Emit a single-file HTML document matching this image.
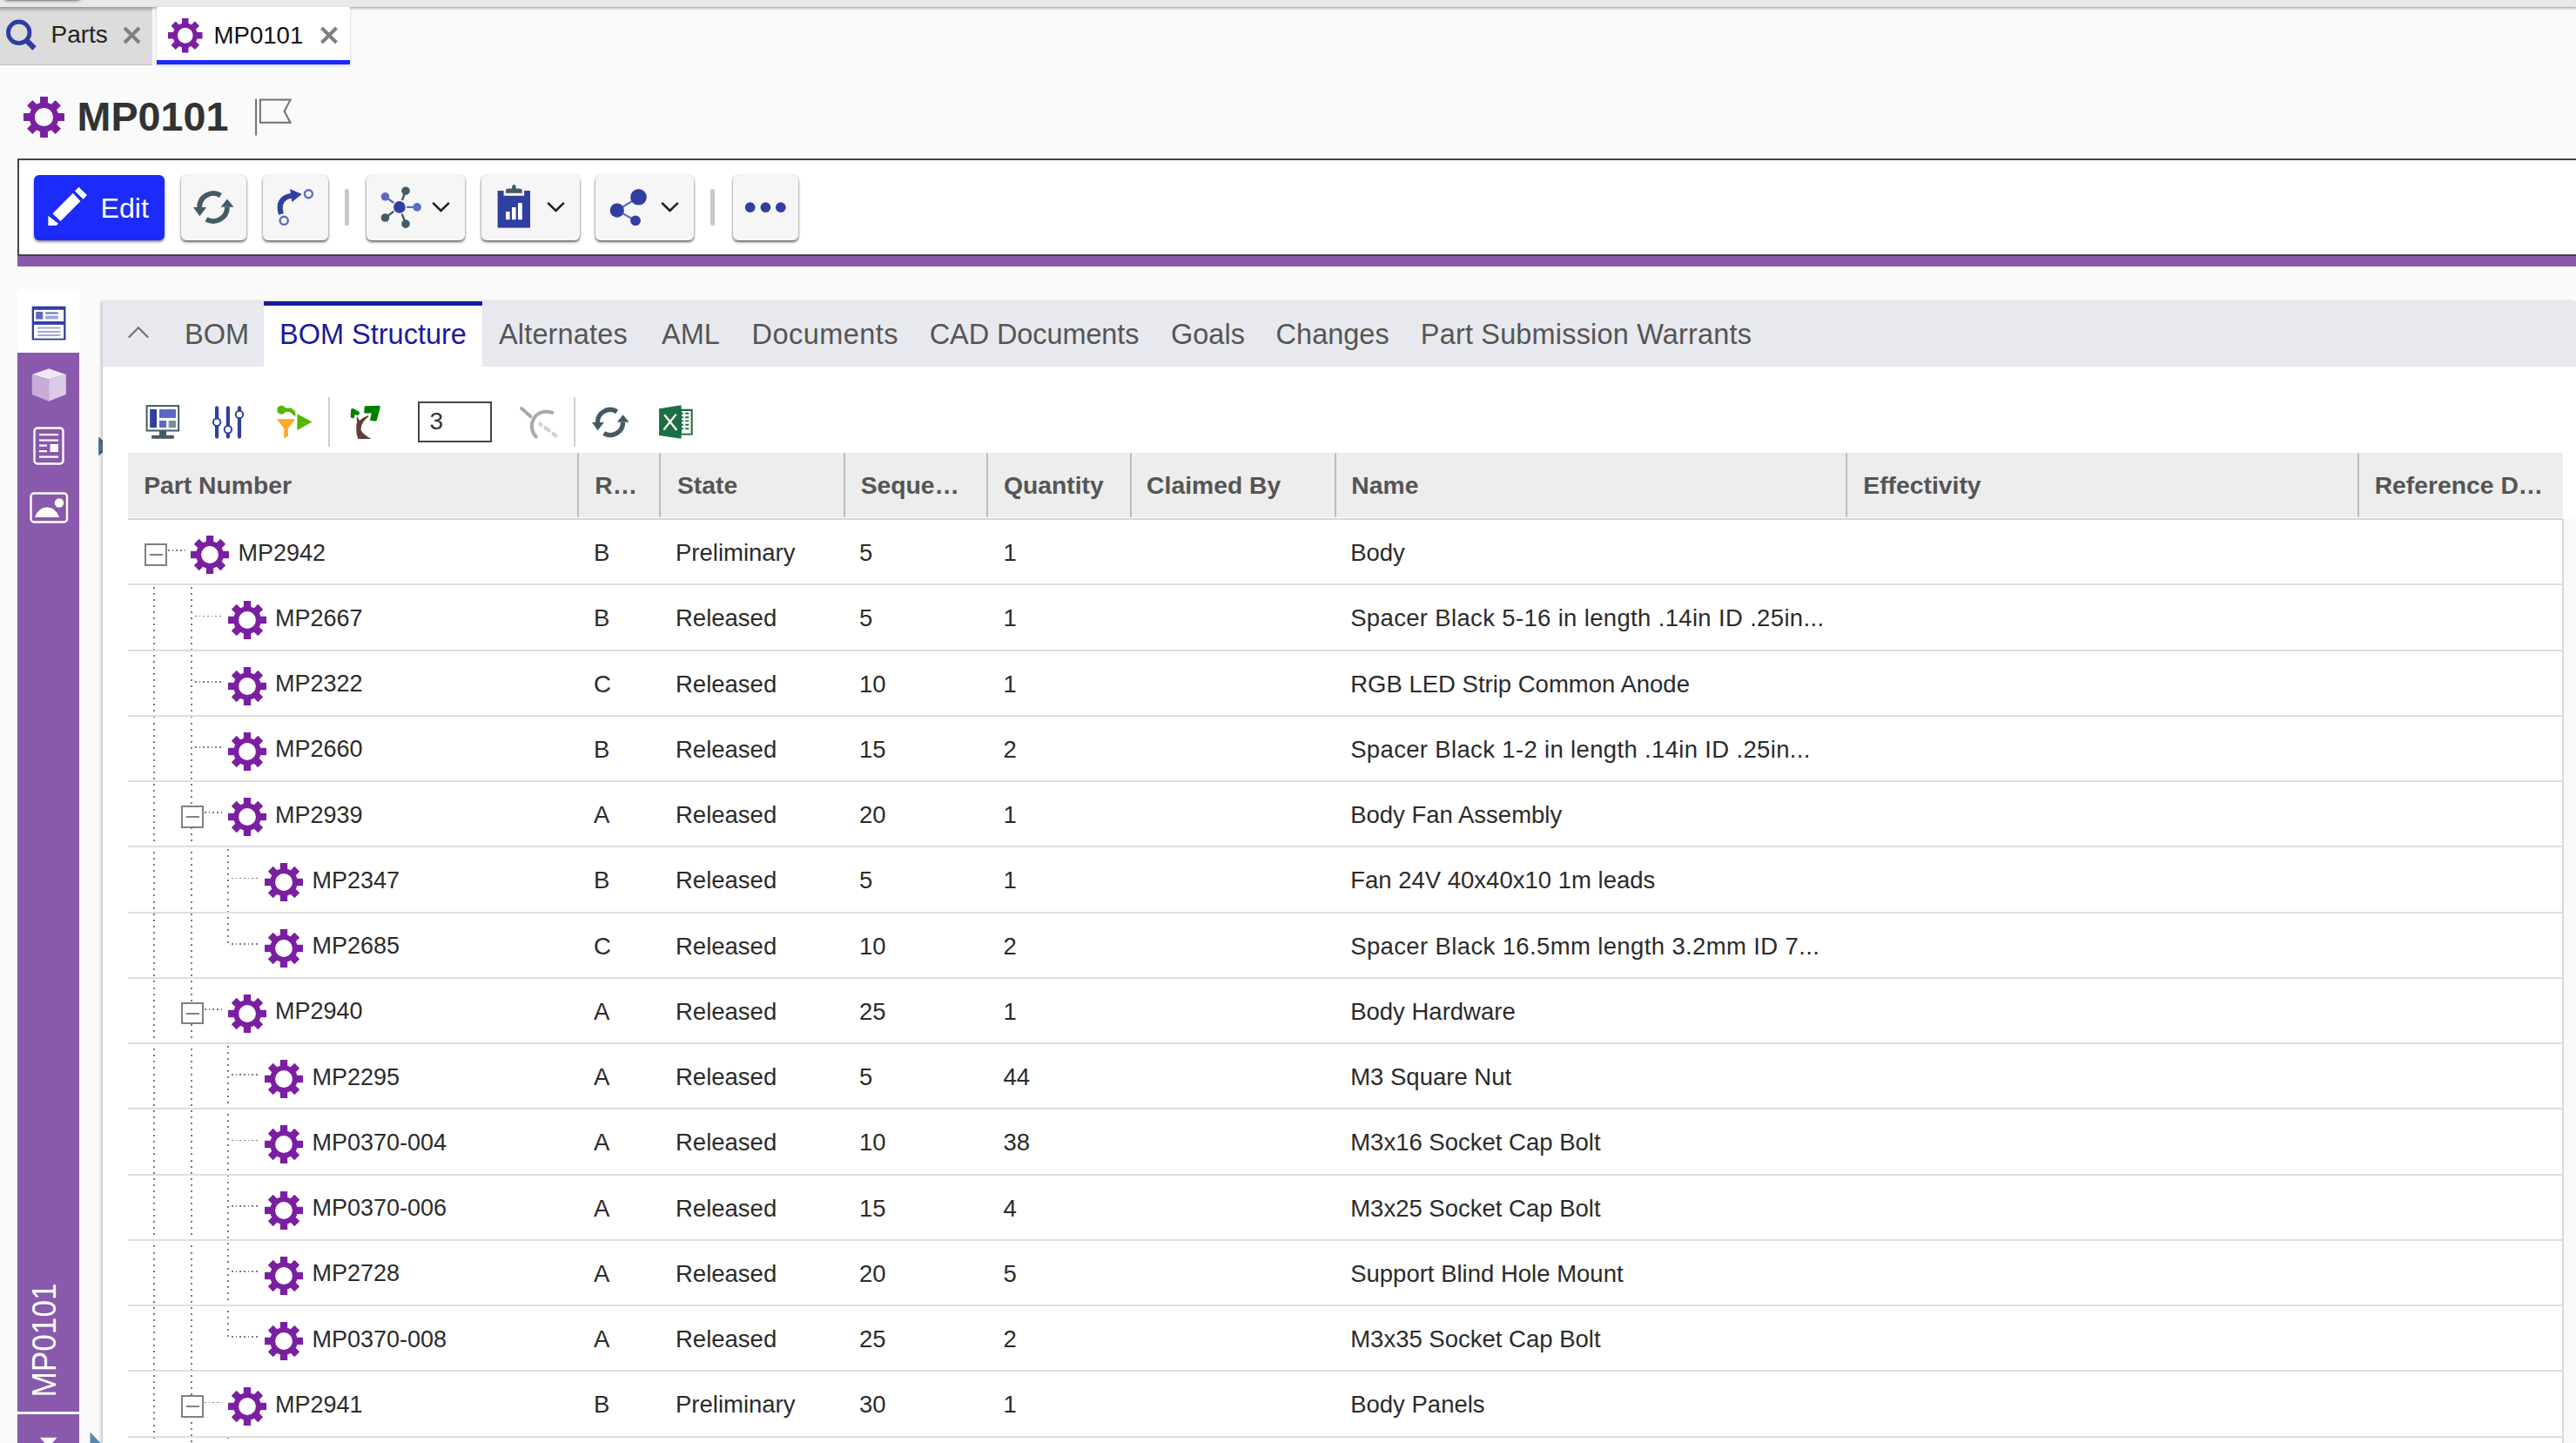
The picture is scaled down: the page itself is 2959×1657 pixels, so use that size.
<!DOCTYPE html><html><head><meta charset="utf-8"><style>
html,body{margin:0;padding:0}
body{width:2959px;height:1657px;overflow:hidden;position:relative;background:#fafafa;font-family:"Liberation Sans",sans-serif}
.a{position:absolute}
.t{position:absolute;white-space:nowrap}
.btn{position:absolute;top:201px;height:75px;background:#f6f6f6;border-radius:6px;box-shadow:0 2px 3px rgba(0,0,0,.6),0 0 2px rgba(0,0,0,.18)}
.rl{position:absolute;left:147px;width:2797px;height:2px;background:#dedede}
.vs{position:absolute;top:520px;height:74px;width:2px;background:#bdbdbd}
</style></head><body>


<div class="a" style="left:0;top:0;width:2959px;height:8px;background:#eae8ea;box-shadow:0 1.5px 3px rgba(0,0,0,.35)"></div>
<div class="a" style="left:3px;top:-20px;width:91px;height:20px;border-radius:6px;box-shadow:0 1px 3px rgba(0,0,0,.55)"></div>
<div class="a" style="left:0;top:8px;width:175px;height:65.5px;background:linear-gradient(to bottom,#999 0,#b2b2b2 2px,#c9c9c9 4px,#d6d6d6 6px,#dcdcdc 8px,#dcdcdc 100%);border-bottom:1.5px solid #bdbdbd"></div>
<svg class="a" style="left:6px;top:22px" width="38" height="38" viewBox="0 0 38 38"><circle cx="15.7" cy="15.3" r="12.3" fill="none" stroke="#2f3da1" stroke-width="4.8"/><path d="M24 24 L33.5 33.5" stroke="#2f3da1" stroke-width="6.2"/></svg>
<div class="t" style="left:58.50px;top:26.00px;font-size:28px;line-height:28px;color:#222;font-weight:400;">Parts</div>
<svg class="a" style="left:141px;top:30px" width="21" height="21" viewBox="0 0 21 21"><path d="M2 2L19 19M19 2L2 19" stroke="#7f7f7f" stroke-width="4"/></svg>
<div class="a" style="left:180px;top:8px;width:222px;height:66px;background:#fff;box-shadow:0 1px 3px rgba(0,0,0,.2)"></div>
<div class="a" style="left:180px;top:69px;width:222px;height:5px;background:#1a29fb"></div>
<svg class="a" style="left:193.00px;top:21.00px" width="39.5" height="39.5" viewBox="0 0 100 100"><g fill="#7b1fa2"><circle cx="50" cy="50" r="36"/><rect x="40.5" y="0" width="19" height="100"/><rect x="0" y="40.5" width="100" height="19"/><rect x="40.5" y="1" width="19" height="98" transform="rotate(45 50 50)"/><rect x="1" y="40.5" width="98" height="19" transform="rotate(45 50 50)"/></g><circle cx="50" cy="50" r="22.5" fill="#fff"/></svg>
<div class="t" style="left:245.50px;top:26.64px;font-size:27.6px;line-height:27.6px;color:#111;font-weight:400;">MP0101</div>
<svg class="a" style="left:367px;top:30px" width="22" height="21" viewBox="0 0 22 21"><path d="M2.5 2L19.5 19M19.5 2L2.5 19" stroke="#7f7f7f" stroke-width="4"/></svg>
<svg class="a" style="left:27.00px;top:111.20px" width="47" height="47" viewBox="0 0 100 100"><g fill="#7b1fa2"><circle cx="50" cy="50" r="36"/><rect x="40.5" y="0" width="19" height="100"/><rect x="0" y="40.5" width="100" height="19"/><rect x="40.5" y="1" width="19" height="98" transform="rotate(45 50 50)"/><rect x="1" y="40.5" width="98" height="19" transform="rotate(45 50 50)"/></g><circle cx="50" cy="50" r="22.5" fill="#fafafa"/></svg>
<div class="t" style="left:88.50px;top:111.47px;font-size:46.7px;line-height:46.7px;color:#333;font-weight:700;">MP0101</div>
<svg class="a" style="left:292px;top:112px" width="45" height="46" viewBox="0 0 45 46"><path d="M2.1 1.6V43.6" stroke="#707070" stroke-width="2"/><path d="M6.9 2.6H41.6L34.6 15.7L41.6 28.8H6.9Z" fill="none" stroke="#707070" stroke-width="2"/></svg>
<div class="a" style="left:20px;top:182px;width:2939px;height:108px;background:#fff;border-top:2px solid #444;border-left:2px solid #444;border-bottom:2px solid #444"></div>
<div class="a" style="left:20px;top:294px;width:2939px;height:12px;background:#8959ab"></div>
<div class="a" style="left:39px;top:201px;width:150px;height:75px;background:#1c2bfa;border-radius:6px;box-shadow:0 2px 3px rgba(0,0,0,.45)"></div>
<svg class="a" style="left:54px;top:213px" width="48" height="48" viewBox="0 0 48 48"><path d="M1.4 34.8 L1.4 46 L10.7 46 L13 43.7 Z" fill="#fff"/><path d="M6.4 32.2 L29.8 8.7 L38.4 18 L15.6 41.1 Z" fill="#fff"/><path d="M32.1 6.4 L36.4 1.8 L46 11 L41.7 15.7 Z" fill="#fff"/></svg>
<div class="t" style="left:115.50px;top:222.54px;font-size:32.2px;line-height:32.2px;color:#fff;font-weight:400;">Edit</div>
<div class="btn" style="left:208px;width:75px"></div>
<svg class="a" style="left:220.9px;top:213.9px" width="48" height="48" viewBox="0 0 48 48"><path d="M32.43 10.52 A15.9 15.9 0 0 0 8.1 24" fill="none" stroke="#455a64" stroke-width="5.8"/><path d="M1 24 L16.1 24 L8.4 34.2 Z" fill="#455a64"/><path d="M15.93 37.7 A15.9 15.9 0 0 0 39.9 24" fill="none" stroke="#455a64" stroke-width="5.8"/><path d="M32.6 23.8 L47.5 23.8 L40 14.5 Z" fill="#455a64"/></svg>
<div class="btn" style="left:302px;width:75px"></div>
<svg class="a" style="left:310px;top:208px" width="60" height="60" viewBox="310 208 60 60"><path d="M322.9 245.8 C 320.5 238, 321 231, 328.3 226.7 C 330 225.6, 332 225, 335 224.6" fill="none" stroke="#303f9f" stroke-width="6"/><path d="M333.1 217.1 L346.8 223 L335.4 231.9 Z" fill="#303f9f"/><circle cx="326.2" cy="253.3" r="4.6" fill="none" stroke="#5c6bc0" stroke-width="2.4"/><circle cx="354.4" cy="222.8" r="4.5" fill="none" stroke="#5c6bc0" stroke-width="2.4"/></svg>
<div class="a" style="left:816px;top:217px;width:4.5px;height:42px;background:#c8c8c8;border-radius:2px"></div>
<div class="a" style="left:396px;top:217px;width:4.5px;height:42px;background:#c8c8c8;border-radius:2px"></div>
<div class="btn" style="left:421px;width:113px"></div>
<svg class="a" style="left:437px;top:214px" width="48" height="48" viewBox="437 214 48 48">
<path d="M458.9 237.9 L479.1 237.9 M458.9 237.9 L442.5 225.8" stroke="#5c6bc0" stroke-width="2.4"/>
<path d="M458.9 237.9 L466 219.2 M458.9 237.9 L442.5 250 M458.9 237.9 L466 257.1" stroke="#455a64" stroke-width="2.4"/>
<circle cx="458.9" cy="237.9" r="8.3" fill="#f6f6f6"/><circle cx="458.9" cy="237.9" r="6.8" fill="#303f9f"/>
<circle cx="479.1" cy="237.9" r="4.8" fill="#5c6bc0"/><circle cx="442.5" cy="225.8" r="4.8" fill="#5c6bc0"/>
<circle cx="466" cy="219.2" r="4.8" fill="#455a64"/><circle cx="442.5" cy="250" r="4.8" fill="#455a64"/><circle cx="466" cy="257.1" r="4.8" fill="#455a64"/>
</svg>
<svg class="a" style="left:495.5px;top:231px" width="21" height="14" viewBox="0 0 21 14"><path d="M1.2 1.8 L10.5 11 L19.8 1.8" fill="none" stroke="#222" stroke-width="2.6"/></svg>
<div class="btn" style="left:553px;width:113px"></div>
<svg class="a" style="left:570px;top:211px" width="42" height="52" viewBox="570 211 42 52">
<rect x="571.6" y="219" width="37.4" height="42.6" fill="#303f9f"/>
<rect x="578.6" y="217" width="23.5" height="7.8" fill="#f6f6f6"/>
<path d="M581 221.7 L581 219 Q581 216.5 584 216.5 L588 216.5 Q588 212 590.4 212 Q592.8 212 592.8 216.5 L596.8 216.5 Q599.7 216.5 599.7 219 L599.7 221.7 Z" fill="#455a64"/>
<rect x="581" y="243" width="4.6" height="9.2" fill="#fff"/>
<rect x="588" y="238" width="4.6" height="14.2" fill="#fff"/>
<rect x="595" y="233" width="4.8" height="19.2" fill="#fff"/>
</svg>
<svg class="a" style="left:627.5px;top:231px" width="21" height="14" viewBox="0 0 21 14"><path d="M1.2 1.8 L10.5 11 L19.8 1.8" fill="none" stroke="#222" stroke-width="2.6"/></svg>
<div class="btn" style="left:684px;width:113px"></div>
<svg class="a" style="left:698px;top:214px" width="48" height="48" viewBox="698 214 48 48">
<path d="M708.8 241.6 L733.5 226.3 M708.8 241.6 L730 253.3" stroke="#5c6bc0" stroke-width="2.2"/>
<circle cx="733.5" cy="226.3" r="9.3" fill="#303f9f"/><circle cx="708.8" cy="241.6" r="8.1" fill="#303f9f"/><circle cx="730" cy="253.3" r="5.9" fill="#303f9f"/>
</svg>
<svg class="a" style="left:758.5px;top:231px" width="21" height="14" viewBox="0 0 21 14"><path d="M1.2 1.8 L10.5 11 L19.8 1.8" fill="none" stroke="#222" stroke-width="2.6"/></svg>
<div class="btn" style="left:842px;width:75px"></div>
<svg class="a" style="left:850px;top:226px" width="60" height="24" viewBox="850 226 60 24"><circle cx="861.7" cy="238.1" r="5.9" fill="#303f9f"/><circle cx="879.4" cy="238.1" r="5.9" fill="#303f9f"/><circle cx="896.8" cy="238.1" r="5.9" fill="#303f9f"/></svg>
<div class="a" style="left:20px;top:405px;width:71px;height:1252px;background:#8959ab"></div>
<div class="a" style="left:20px;top:334px;width:71px;height:71px;background:#fff"></div>
<svg class="a" style="left:36px;top:351px" width="40" height="40" viewBox="0 0 40 40">
<rect x="0.7" y="0.7" width="38.8" height="38.8" fill="#303f9f"/>
<rect x="3" y="4.8" width="34.2" height="13.2" fill="#fff"/>
<rect x="3" y="21.9" width="34.2" height="15.7" fill="#fff"/>
<rect x="5.2" y="7" width="8.1" height="8.6" fill="#5c6bc0"/>
<rect x="16" y="7.4" width="14.9" height="2" rx="1" fill="#5c6bc0"/>
<rect x="16" y="11.5" width="14.9" height="4.1" rx="1" fill="#9fa8da"/>
<rect x="7" y="24.5" width="26.6" height="2" rx="1" fill="#9fa8da"/><rect x="7" y="29" width="26.6" height="2" rx="1" fill="#9fa8da"/><rect x="7" y="33" width="26.6" height="2" rx="1" fill="#9fa8da"/>
</svg>
<svg class="a" style="left:36px;top:423px" width="41" height="39" viewBox="0 0 41 39">
<path d="M20.1 0.3 L39.9 7.1 L20.1 12.5 L0.7 7.1 Z" fill="#f0e6f4"/>
<path d="M0.7 7.1 L20.1 12.5 L20.1 37.7 L0.7 30.1 Z" fill="#c6acd6"/>
<path d="M39.9 7.1 L20.1 12.5 L20.1 37.7 L39.9 30.1 Z" fill="#dacbe6"/>
</svg>
<svg class="a" style="left:38px;top:490px" width="37" height="45" viewBox="0 0 37 45">
<rect x="1.5" y="1.5" width="33" height="41" rx="3.5" fill="none" stroke="#fff" stroke-width="2.4"/>
<rect x="7" y="8" width="22" height="2.2" fill="#fff"/><rect x="7" y="14.5" width="22" height="2.2" fill="#fff"/>
<rect x="7" y="20.5" width="9" height="2.2" fill="#fff"/><rect x="7" y="27" width="9" height="2.2" fill="#fff"/>
<rect x="19.5" y="20" width="9.5" height="9" fill="#fff"/>
<rect x="7" y="33.5" width="22" height="2.2" fill="#fff"/>
</svg>
<svg class="a" style="left:34px;top:565px" width="45" height="36" viewBox="0 0 45 36">
<rect x="1.5" y="1.5" width="41.5" height="33" rx="3.5" fill="none" stroke="#fff" stroke-width="2.4"/>
<path d="M6 29 Q10 17.5 20 17.5 Q30 17.5 34 29 Z" fill="#fff"/>
<circle cx="34" cy="12.5" r="5.2" fill="#fff"/>
</svg>
<div class="t" style="left:50.8px;top:1538.5px;font-size:38px;line-height:38px;color:#fff;transform:translate(-50%,-50%) rotate(-90deg) scaleX(0.927)">MP0101</div>
<div class="a" style="left:20px;top:1621px;width:71px;height:2.5px;background:#fff"></div>
<svg class="a" style="left:46px;top:1650px" width="20" height="10" viewBox="0 0 20 10"><path d="M0 0.8 L19.5 0.8 L9.75 12 Z" fill="#fff"/></svg>
<svg class="a" style="left:112px;top:501px" width="7" height="23" viewBox="0 0 7 23"><path d="M1.3 1 Q1.6 0.6 2.2 1.2 L4.5 3.5 Q6.7 4.5 6.7 7 L6.7 16 Q6.7 18.5 4.5 19.5 L2.2 21.8 Q1.6 22.4 1.3 22 Z" fill="#3f607c"/><path d="M3 5 L5.6 6.5 L5.6 16.5 L3 18 Z" fill="#5a80a0"/></svg>
<svg class="a" style="left:103px;top:1644px" width="14" height="14" viewBox="0 0 14 14"><path d="M0.5 0.5 L13 13.5 L0.5 13.5 Z" fill="#5a86ab"/></svg>
<div class="a" style="left:118px;top:346px;width:2841px;height:1311px;background:#fff;box-shadow:-2px 0 3px rgba(0,0,0,.22)"></div>
<div class="a" style="left:118px;top:346px;width:2841px;height:75px;background:#e8e9ee"></div>
<div class="a" style="left:303px;top:346px;width:251px;height:75px;background:#fff"></div>
<div class="a" style="left:303px;top:346px;width:251px;height:5px;background:#1a1a9c"></div>
<svg class="a" style="left:146px;top:374px" width="27" height="17" viewBox="0 0 27 17"><path d="M1.8 13.6 L13 2.3 L24.2 13.6" fill="none" stroke="#707070" stroke-width="2.2"/></svg>
<div class="t" style="left:212.00px;top:367.69px;font-size:32.5px;line-height:32.5px;color:#555;font-weight:400;letter-spacing:0px">BOM</div>
<div class="t" style="left:321.00px;top:367.69px;font-size:32.5px;line-height:32.5px;color:#1a1a9c;font-weight:400;letter-spacing:0px">BOM Structure</div>
<div class="t" style="left:573.00px;top:367.69px;font-size:32.5px;line-height:32.5px;color:#555;font-weight:400;letter-spacing:0.15px">Alternates</div>
<div class="t" style="left:760.00px;top:367.69px;font-size:32.5px;line-height:32.5px;color:#555;font-weight:400;letter-spacing:0px">AML</div>
<div class="t" style="left:863.50px;top:367.69px;font-size:32.5px;line-height:32.5px;color:#555;font-weight:400;letter-spacing:0.45px">Documents</div>
<div class="t" style="left:1067.70px;top:367.69px;font-size:32.5px;line-height:32.5px;color:#555;font-weight:400;letter-spacing:-0.1px">CAD Documents</div>
<div class="t" style="left:1345.00px;top:367.69px;font-size:32.5px;line-height:32.5px;color:#555;font-weight:400;letter-spacing:0px">Goals</div>
<div class="t" style="left:1465.60px;top:367.69px;font-size:32.5px;line-height:32.5px;color:#555;font-weight:400;letter-spacing:0px">Changes</div>
<div class="t" style="left:1631.80px;top:367.69px;font-size:32.5px;line-height:32.5px;color:#555;font-weight:400;letter-spacing:0.17px">Part Submission Warrants</div>
<svg class="a" style="left:167px;top:464px" width="40" height="41" viewBox="167 464 40 41">
<rect x="168.6" y="466.1" width="36.6" height="28.4" fill="#fff" stroke="#455a64" stroke-width="2"/>
<rect x="172.2" y="470" width="7.8" height="21" fill="#303f9f"/>
<rect x="183" y="470" width="19" height="10" fill="#5c6bc0"/>
<rect x="183" y="483" width="8" height="8" fill="#5c6bc0"/>
<rect x="193.7" y="483" width="8.3" height="8" fill="#78909c"/>
<rect x="183" y="495" width="8" height="5" fill="#455a64"/>
<rect x="174.2" y="499.8" width="25.6" height="4" fill="#455a64"/>
</svg>
<svg class="a" style="left:240px;top:464px" width="44" height="42" viewBox="240 464 44 42">
<path d="M249.1 468.3 V501.6 M261.9 468.3 V501.6 M275 468.3 V501.6" stroke="#303f9f" stroke-width="4.2" stroke-linecap="round"/>
<circle cx="249.1" cy="484.7" r="4.2" fill="#fff" stroke="#303f9f" stroke-width="2"/>
<circle cx="261.9" cy="493.3" r="4.2" fill="#fff" stroke="#303f9f" stroke-width="2"/>
<circle cx="275" cy="475.9" r="4.2" fill="#fff" stroke="#303f9f" stroke-width="2"/>
</svg>
<svg class="a" style="left:316px;top:464px" width="45" height="42" viewBox="316 464 45 42">
<path d="M318 481.2 H339.1 L330.8 492.3 L331 500.6 L326.3 503.8 V492.3 Z" fill="#ffa726"/>
<circle cx="323.3" cy="470.7" r="5" fill="#52b800"/>
<path d="M326.5 468.4 H334.4 L339.1 472.6 L339.5 478.4 L332.9 472.9 H326.5 Z" fill="#52b800"/>
<path d="M341.4 475.3 L358.4 484.5 L341.4 494 Z" fill="#52b800"/>
</svg>
<div class="a" style="left:377px;top:456px;width:1.8px;height:57px;background:#cfcfcf"></div>
<svg class="a" style="left:400px;top:463px" width="40" height="44" viewBox="400 463 40 44">
<path d="M418.6 467 Q419 466.3 420 466.3 L435.8 465.8 Q437 466 436.6 468.4 L432.8 482.6 Q432.2 483.8 431 483.6 L426.2 483.2 Q424.8 482.8 425.1 481.9 L426.7 474.3 L420 474.8 Q418.2 474.6 418.2 473.2 Z" fill="#008000"/>
<path d="M403.3 469.8 Q404 469 405.4 469.1 L411.6 472.2 Q413.5 473.5 413 474.3 L412 476.4 Q411 476.9 409.9 476.7 L407.8 476 L406.8 479.5 Q406.2 480.6 405.4 480.5 L403 479.5 Q402.5 479 402.6 477.4 Z" fill="#008000"/>
<path d="M409.6 479.1 L410.8 479.1 L413 483 Q417 479.5 422.7 477.1 L423.4 478.2 Q419.5 481.5 417.2 484.7 Q414.2 489 414.6 493.7 Q416 498 426.4 503.9 L411.3 503.9 Q409 498 409.2 492 Q409.3 488 410 484.5 Z" fill="#5d4037"/>
</svg>
<div class="a" style="left:480px;top:461px;width:81px;height:43px;border:2px solid #444;background:#fff"></div>
<div class="t" style="left:493.50px;top:470.30px;font-size:28px;line-height:28px;color:#333;font-weight:400;">3</div>
<svg class="a" style="left:594px;top:465px" width="48" height="40" viewBox="594 465 48 40">
<path d="M599.1 469.1 L609.3 478.1" stroke="#a8a8a8" stroke-width="4" stroke-linecap="round"/>
<path d="M634.3 473.8 Q622 470.5, 615 478 Q609.5 485, 611.2 493 Q612.3 498, 615.7 501.5" fill="none" stroke="#a8a8a8" stroke-width="4" stroke-linecap="round"/>
<path d="M620.3 486.8 L621.3 487.9 M626.4 491.3 L630.7 494.3 M635.8 498.1 L638.4 500.3" stroke="#d3d3d3" stroke-width="4.4" stroke-linecap="round"/>
</svg>
<div class="a" style="left:659px;top:455.5px;width:1.8px;height:57.5px;background:#cfcfcf"></div>
<svg class="a" style="left:679.2px;top:462.8px" width="44" height="44" viewBox="0 0 48 48"><path d="M32.43 10.52 A15.9 15.9 0 0 0 8.1 24" fill="none" stroke="#455a64" stroke-width="5.8"/><path d="M1 24 L16.1 24 L8.4 34.2 Z" fill="#455a64"/><path d="M15.93 37.7 A15.9 15.9 0 0 0 39.9 24" fill="none" stroke="#455a64" stroke-width="5.8"/><path d="M32.6 23.8 L47.5 23.8 L40 14.5 Z" fill="#455a64"/></svg>
<svg class="a" style="left:756px;top:464px" width="41" height="41" viewBox="756 464 41 41">
<path d="M757.05 469.3 L782.6 465.3 L782.6 503.8 L757.05 500 Z" fill="#1e6e43"/>
<rect x="782" y="469.7" width="13.7" height="29.9" fill="#1e6e43"/>
<rect x="783" y="472" width="10.6" height="25.7" fill="#fff"/>
<path d="M783 474.8 H785 M787.2 474.8 H791.3 M783 479.2 H785 M787.2 479.2 H791.3 M783 483.4 H785 M787.2 483.4 H791.3 M783 487.8 H785 M787.2 487.8 H791.3 M783 492.2 H785 M787.2 492.2 H791.3" stroke="#1e6e43" stroke-width="1.9"/>
<path d="M763.2 476.2 L777.4 494 M776.7 475.6 L762.4 493.6" stroke="#fff" stroke-width="2.3"/>
</svg>
<div class="a" style="left:147px;top:519.5px;width:2797px;height:74.5px;background:#ededed"></div>
<div class="a" style="left:147px;top:594.5px;width:2797.5px;height:2px;background:#d6d6d6"></div>
<div class="vs" style="left:662.9px"></div>
<div class="vs" style="left:756.9px"></div>
<div class="vs" style="left:968.6px"></div>
<div class="vs" style="left:1133.1px"></div>
<div class="vs" style="left:1297.7px"></div>
<div class="vs" style="left:1532.9px"></div>
<div class="vs" style="left:2119.8px"></div>
<div class="vs" style="left:2707.9px"></div>
<div class="t" style="left:165.20px;top:542.84px;font-size:28.3px;line-height:28.3px;color:#555;font-weight:700;">Part Number</div>
<div class="t" style="left:683.30px;top:542.84px;font-size:28.3px;line-height:28.3px;color:#555;font-weight:700;">R&#8230;</div>
<div class="t" style="left:778.00px;top:542.84px;font-size:28.3px;line-height:28.3px;color:#555;font-weight:700;">State</div>
<div class="t" style="left:988.70px;top:542.84px;font-size:28.3px;line-height:28.3px;color:#555;font-weight:700;">Seque&#8230;</div>
<div class="t" style="left:1152.90px;top:542.84px;font-size:28.3px;line-height:28.3px;color:#555;font-weight:700;">Quantity</div>
<div class="t" style="left:1317.10px;top:542.84px;font-size:28.3px;line-height:28.3px;color:#555;font-weight:700;">Claimed By</div>
<div class="t" style="left:1552.30px;top:542.84px;font-size:28.3px;line-height:28.3px;color:#555;font-weight:700;">Name</div>
<div class="t" style="left:2140.30px;top:542.84px;font-size:28.3px;line-height:28.3px;color:#555;font-weight:700;">Effectivity</div>
<div class="t" style="left:2727.70px;top:542.84px;font-size:28.3px;line-height:28.3px;color:#555;font-weight:700;">Reference D&#8230;</div>
<div class="a" style="left:176.20px;top:674.25px;width:2.2px;height:982.75px;background:repeating-linear-gradient(to bottom,#7a7a7a 0 2px,transparent 2px 7.07px)"></div>
<div class="a" style="left:218.90px;top:674.25px;width:2.2px;height:928.00px;background:repeating-linear-gradient(to bottom,#7a7a7a 0 2px,transparent 2px 7.07px)"></div>
<div class="a" style="left:218.90px;top:1612.25px;width:2.2px;height:44.75px;background:repeating-linear-gradient(to bottom,#7a7a7a 0 2px,transparent 2px 7.07px)"></div>
<div class="a" style="left:260.90px;top:975.25px;width:2.2px;height:109.25px;background:repeating-linear-gradient(to bottom,#7a7a7a 0 2px,transparent 2px 7.07px)"></div>
<div class="a" style="left:260.90px;top:1201.00px;width:2.2px;height:335.00px;background:repeating-linear-gradient(to bottom,#7a7a7a 0 2px,transparent 2px 7.07px)"></div>
<div class="a" style="left:260.90px;top:1650.00px;width:2.2px;height:7.00px;background:repeating-linear-gradient(to bottom,#7a7a7a 0 2px,transparent 2px 7.07px)"></div>
<div class="rl" style="top:670.25px"></div>
<div class="a" style="left:166.0px;top:624.00px;width:21.7px;height:21.7px;border:2px solid #808080;background:#fff"></div>
<div class="a" style="left:171.5px;top:636.00px;width:15px;height:2px;background:#808080"></div>
<div class="a" style="left:193.00px;top:631.45px;width:21.00px;height:1.6px;background:repeating-linear-gradient(to right,#7a7a7a 0 1.8px,transparent 1.8px 4.66px)"></div>
<svg class="a" style="left:219.00px;top:615.00px" width="44" height="44" viewBox="0 0 100 100"><g fill="#7b1fa2"><circle cx="50" cy="50" r="36"/><rect x="40.5" y="0" width="19" height="100"/><rect x="0" y="40.5" width="100" height="19"/><rect x="40.5" y="1" width="19" height="98" transform="rotate(45 50 50)"/><rect x="1" y="40.5" width="98" height="19" transform="rotate(45 50 50)"/></g><circle cx="50" cy="50" r="22.5" fill="#fff"/></svg>
<div class="t" style="left:273.50px;top:621.54px;font-size:27.0px;line-height:27.0px;color:#2b2b2b;font-weight:400;">MP2942</div>
<div class="t" style="left:682.00px;top:621.12px;font-size:27.5px;line-height:27.5px;color:#2b2b2b;font-weight:400;">B</div>
<div class="t" style="left:776.00px;top:621.12px;font-size:27.5px;line-height:27.5px;color:#2b2b2b;font-weight:400;">Preliminary</div>
<div class="t" style="left:987.00px;top:621.12px;font-size:27.5px;line-height:27.5px;color:#2b2b2b;font-weight:400;">5</div>
<div class="t" style="left:1152.50px;top:621.12px;font-size:27.5px;line-height:27.5px;color:#2b2b2b;font-weight:400;">1</div>
<div class="t" style="left:1551.20px;top:621.12px;font-size:27.5px;line-height:27.5px;color:#2b2b2b;font-weight:400;">Body</div>
<div class="rl" style="top:745.50px"></div>
<div class="a" style="left:224.00px;top:706.70px;width:29.50px;height:1.6px;background:repeating-linear-gradient(to right,#7a7a7a 0 1.8px,transparent 1.8px 4.66px)"></div>
<svg class="a" style="left:261.50px;top:690.25px" width="44" height="44" viewBox="0 0 100 100"><g fill="#7b1fa2"><circle cx="50" cy="50" r="36"/><rect x="40.5" y="0" width="19" height="100"/><rect x="0" y="40.5" width="100" height="19"/><rect x="40.5" y="1" width="19" height="98" transform="rotate(45 50 50)"/><rect x="1" y="40.5" width="98" height="19" transform="rotate(45 50 50)"/></g><circle cx="50" cy="50" r="22.5" fill="#fff"/></svg>
<div class="t" style="left:316.00px;top:696.79px;font-size:27.0px;line-height:27.0px;color:#2b2b2b;font-weight:400;">MP2667</div>
<div class="t" style="left:682.00px;top:696.37px;font-size:27.5px;line-height:27.5px;color:#2b2b2b;font-weight:400;">B</div>
<div class="t" style="left:776.00px;top:696.37px;font-size:27.5px;line-height:27.5px;color:#2b2b2b;font-weight:400;">Released</div>
<div class="t" style="left:987.00px;top:696.37px;font-size:27.5px;line-height:27.5px;color:#2b2b2b;font-weight:400;">5</div>
<div class="t" style="left:1152.50px;top:696.37px;font-size:27.5px;line-height:27.5px;color:#2b2b2b;font-weight:400;">1</div>
<div class="t" style="left:1551.20px;top:696.37px;font-size:27.5px;line-height:27.5px;color:#2b2b2b;font-weight:400;letter-spacing:0.34px">Spacer Black 5-16 in length .14in ID .25in...</div>
<div class="rl" style="top:820.75px"></div>
<div class="a" style="left:224.00px;top:781.95px;width:29.50px;height:1.6px;background:repeating-linear-gradient(to right,#7a7a7a 0 1.8px,transparent 1.8px 4.66px)"></div>
<svg class="a" style="left:261.50px;top:765.50px" width="44" height="44" viewBox="0 0 100 100"><g fill="#7b1fa2"><circle cx="50" cy="50" r="36"/><rect x="40.5" y="0" width="19" height="100"/><rect x="0" y="40.5" width="100" height="19"/><rect x="40.5" y="1" width="19" height="98" transform="rotate(45 50 50)"/><rect x="1" y="40.5" width="98" height="19" transform="rotate(45 50 50)"/></g><circle cx="50" cy="50" r="22.5" fill="#fff"/></svg>
<div class="t" style="left:316.00px;top:772.04px;font-size:27.0px;line-height:27.0px;color:#2b2b2b;font-weight:400;">MP2322</div>
<div class="t" style="left:682.00px;top:771.62px;font-size:27.5px;line-height:27.5px;color:#2b2b2b;font-weight:400;">C</div>
<div class="t" style="left:776.00px;top:771.62px;font-size:27.5px;line-height:27.5px;color:#2b2b2b;font-weight:400;">Released</div>
<div class="t" style="left:987.00px;top:771.62px;font-size:27.5px;line-height:27.5px;color:#2b2b2b;font-weight:400;">10</div>
<div class="t" style="left:1152.50px;top:771.62px;font-size:27.5px;line-height:27.5px;color:#2b2b2b;font-weight:400;">1</div>
<div class="t" style="left:1551.20px;top:771.62px;font-size:27.5px;line-height:27.5px;color:#2b2b2b;font-weight:400;">RGB LED Strip Common Anode</div>
<div class="rl" style="top:896.00px"></div>
<div class="a" style="left:224.00px;top:857.20px;width:29.50px;height:1.6px;background:repeating-linear-gradient(to right,#7a7a7a 0 1.8px,transparent 1.8px 4.66px)"></div>
<svg class="a" style="left:261.50px;top:840.75px" width="44" height="44" viewBox="0 0 100 100"><g fill="#7b1fa2"><circle cx="50" cy="50" r="36"/><rect x="40.5" y="0" width="19" height="100"/><rect x="0" y="40.5" width="100" height="19"/><rect x="40.5" y="1" width="19" height="98" transform="rotate(45 50 50)"/><rect x="1" y="40.5" width="98" height="19" transform="rotate(45 50 50)"/></g><circle cx="50" cy="50" r="22.5" fill="#fff"/></svg>
<div class="t" style="left:316.00px;top:847.29px;font-size:27.0px;line-height:27.0px;color:#2b2b2b;font-weight:400;">MP2660</div>
<div class="t" style="left:682.00px;top:846.87px;font-size:27.5px;line-height:27.5px;color:#2b2b2b;font-weight:400;">B</div>
<div class="t" style="left:776.00px;top:846.87px;font-size:27.5px;line-height:27.5px;color:#2b2b2b;font-weight:400;">Released</div>
<div class="t" style="left:987.00px;top:846.87px;font-size:27.5px;line-height:27.5px;color:#2b2b2b;font-weight:400;">15</div>
<div class="t" style="left:1152.50px;top:846.87px;font-size:27.5px;line-height:27.5px;color:#2b2b2b;font-weight:400;">2</div>
<div class="t" style="left:1551.20px;top:846.87px;font-size:27.5px;line-height:27.5px;color:#2b2b2b;font-weight:400;letter-spacing:0.34px">Spacer Black 1-2 in length .14in ID .25in...</div>
<div class="rl" style="top:971.25px"></div>
<div class="a" style="left:208.0px;top:925.00px;width:21.7px;height:21.7px;border:2px solid #808080;background:#fff"></div>
<div class="a" style="left:213.5px;top:937.00px;width:15px;height:2px;background:#808080"></div>
<div class="a" style="left:235.00px;top:932.45px;width:21.50px;height:1.6px;background:repeating-linear-gradient(to right,#7a7a7a 0 1.8px,transparent 1.8px 4.66px)"></div>
<svg class="a" style="left:261.50px;top:916.00px" width="44" height="44" viewBox="0 0 100 100"><g fill="#7b1fa2"><circle cx="50" cy="50" r="36"/><rect x="40.5" y="0" width="19" height="100"/><rect x="0" y="40.5" width="100" height="19"/><rect x="40.5" y="1" width="19" height="98" transform="rotate(45 50 50)"/><rect x="1" y="40.5" width="98" height="19" transform="rotate(45 50 50)"/></g><circle cx="50" cy="50" r="22.5" fill="#fff"/></svg>
<div class="t" style="left:316.00px;top:922.54px;font-size:27.0px;line-height:27.0px;color:#2b2b2b;font-weight:400;">MP2939</div>
<div class="t" style="left:682.00px;top:922.12px;font-size:27.5px;line-height:27.5px;color:#2b2b2b;font-weight:400;">A</div>
<div class="t" style="left:776.00px;top:922.12px;font-size:27.5px;line-height:27.5px;color:#2b2b2b;font-weight:400;">Released</div>
<div class="t" style="left:987.00px;top:922.12px;font-size:27.5px;line-height:27.5px;color:#2b2b2b;font-weight:400;">20</div>
<div class="t" style="left:1152.50px;top:922.12px;font-size:27.5px;line-height:27.5px;color:#2b2b2b;font-weight:400;">1</div>
<div class="t" style="left:1551.20px;top:922.12px;font-size:27.5px;line-height:27.5px;color:#2b2b2b;font-weight:400;">Body Fan Assembly</div>
<div class="rl" style="top:1046.50px"></div>
<div class="a" style="left:266.00px;top:1007.70px;width:30.00px;height:1.6px;background:repeating-linear-gradient(to right,#7a7a7a 0 1.8px,transparent 1.8px 4.66px)"></div>
<svg class="a" style="left:304.00px;top:991.25px" width="44" height="44" viewBox="0 0 100 100"><g fill="#7b1fa2"><circle cx="50" cy="50" r="36"/><rect x="40.5" y="0" width="19" height="100"/><rect x="0" y="40.5" width="100" height="19"/><rect x="40.5" y="1" width="19" height="98" transform="rotate(45 50 50)"/><rect x="1" y="40.5" width="98" height="19" transform="rotate(45 50 50)"/></g><circle cx="50" cy="50" r="22.5" fill="#fff"/></svg>
<div class="t" style="left:358.50px;top:997.79px;font-size:27.0px;line-height:27.0px;color:#2b2b2b;font-weight:400;">MP2347</div>
<div class="t" style="left:682.00px;top:997.37px;font-size:27.5px;line-height:27.5px;color:#2b2b2b;font-weight:400;">B</div>
<div class="t" style="left:776.00px;top:997.37px;font-size:27.5px;line-height:27.5px;color:#2b2b2b;font-weight:400;">Released</div>
<div class="t" style="left:987.00px;top:997.37px;font-size:27.5px;line-height:27.5px;color:#2b2b2b;font-weight:400;">5</div>
<div class="t" style="left:1152.50px;top:997.37px;font-size:27.5px;line-height:27.5px;color:#2b2b2b;font-weight:400;">1</div>
<div class="t" style="left:1551.20px;top:997.37px;font-size:27.5px;line-height:27.5px;color:#2b2b2b;font-weight:400;">Fan 24V 40x40x10 1m leads</div>
<div class="rl" style="top:1121.75px"></div>
<div class="a" style="left:266.00px;top:1082.95px;width:30.00px;height:1.6px;background:repeating-linear-gradient(to right,#7a7a7a 0 1.8px,transparent 1.8px 4.66px)"></div>
<svg class="a" style="left:304.00px;top:1066.50px" width="44" height="44" viewBox="0 0 100 100"><g fill="#7b1fa2"><circle cx="50" cy="50" r="36"/><rect x="40.5" y="0" width="19" height="100"/><rect x="0" y="40.5" width="100" height="19"/><rect x="40.5" y="1" width="19" height="98" transform="rotate(45 50 50)"/><rect x="1" y="40.5" width="98" height="19" transform="rotate(45 50 50)"/></g><circle cx="50" cy="50" r="22.5" fill="#fff"/></svg>
<div class="t" style="left:358.50px;top:1073.04px;font-size:27.0px;line-height:27.0px;color:#2b2b2b;font-weight:400;">MP2685</div>
<div class="t" style="left:682.00px;top:1072.62px;font-size:27.5px;line-height:27.5px;color:#2b2b2b;font-weight:400;">C</div>
<div class="t" style="left:776.00px;top:1072.62px;font-size:27.5px;line-height:27.5px;color:#2b2b2b;font-weight:400;">Released</div>
<div class="t" style="left:987.00px;top:1072.62px;font-size:27.5px;line-height:27.5px;color:#2b2b2b;font-weight:400;">10</div>
<div class="t" style="left:1152.50px;top:1072.62px;font-size:27.5px;line-height:27.5px;color:#2b2b2b;font-weight:400;">2</div>
<div class="t" style="left:1551.20px;top:1072.62px;font-size:27.5px;line-height:27.5px;color:#2b2b2b;font-weight:400;letter-spacing:0.37px">Spacer Black 16.5mm length 3.2mm ID 7...</div>
<div class="rl" style="top:1197.00px"></div>
<div class="a" style="left:208.0px;top:1150.75px;width:21.7px;height:21.7px;border:2px solid #808080;background:#fff"></div>
<div class="a" style="left:213.5px;top:1162.75px;width:15px;height:2px;background:#808080"></div>
<div class="a" style="left:235.00px;top:1158.20px;width:21.50px;height:1.6px;background:repeating-linear-gradient(to right,#7a7a7a 0 1.8px,transparent 1.8px 4.66px)"></div>
<svg class="a" style="left:261.50px;top:1141.75px" width="44" height="44" viewBox="0 0 100 100"><g fill="#7b1fa2"><circle cx="50" cy="50" r="36"/><rect x="40.5" y="0" width="19" height="100"/><rect x="0" y="40.5" width="100" height="19"/><rect x="40.5" y="1" width="19" height="98" transform="rotate(45 50 50)"/><rect x="1" y="40.5" width="98" height="19" transform="rotate(45 50 50)"/></g><circle cx="50" cy="50" r="22.5" fill="#fff"/></svg>
<div class="t" style="left:316.00px;top:1148.29px;font-size:27.0px;line-height:27.0px;color:#2b2b2b;font-weight:400;">MP2940</div>
<div class="t" style="left:682.00px;top:1147.87px;font-size:27.5px;line-height:27.5px;color:#2b2b2b;font-weight:400;">A</div>
<div class="t" style="left:776.00px;top:1147.87px;font-size:27.5px;line-height:27.5px;color:#2b2b2b;font-weight:400;">Released</div>
<div class="t" style="left:987.00px;top:1147.87px;font-size:27.5px;line-height:27.5px;color:#2b2b2b;font-weight:400;">25</div>
<div class="t" style="left:1152.50px;top:1147.87px;font-size:27.5px;line-height:27.5px;color:#2b2b2b;font-weight:400;">1</div>
<div class="t" style="left:1551.20px;top:1147.87px;font-size:27.5px;line-height:27.5px;color:#2b2b2b;font-weight:400;">Body Hardware</div>
<div class="rl" style="top:1272.25px"></div>
<div class="a" style="left:266.00px;top:1233.45px;width:30.00px;height:1.6px;background:repeating-linear-gradient(to right,#7a7a7a 0 1.8px,transparent 1.8px 4.66px)"></div>
<svg class="a" style="left:304.00px;top:1217.00px" width="44" height="44" viewBox="0 0 100 100"><g fill="#7b1fa2"><circle cx="50" cy="50" r="36"/><rect x="40.5" y="0" width="19" height="100"/><rect x="0" y="40.5" width="100" height="19"/><rect x="40.5" y="1" width="19" height="98" transform="rotate(45 50 50)"/><rect x="1" y="40.5" width="98" height="19" transform="rotate(45 50 50)"/></g><circle cx="50" cy="50" r="22.5" fill="#fff"/></svg>
<div class="t" style="left:358.50px;top:1223.54px;font-size:27.0px;line-height:27.0px;color:#2b2b2b;font-weight:400;">MP2295</div>
<div class="t" style="left:682.00px;top:1223.12px;font-size:27.5px;line-height:27.5px;color:#2b2b2b;font-weight:400;">A</div>
<div class="t" style="left:776.00px;top:1223.12px;font-size:27.5px;line-height:27.5px;color:#2b2b2b;font-weight:400;">Released</div>
<div class="t" style="left:987.00px;top:1223.12px;font-size:27.5px;line-height:27.5px;color:#2b2b2b;font-weight:400;">5</div>
<div class="t" style="left:1152.50px;top:1223.12px;font-size:27.5px;line-height:27.5px;color:#2b2b2b;font-weight:400;">44</div>
<div class="t" style="left:1551.20px;top:1223.12px;font-size:27.5px;line-height:27.5px;color:#2b2b2b;font-weight:400;">M3 Square Nut</div>
<div class="rl" style="top:1347.50px"></div>
<div class="a" style="left:266.00px;top:1308.70px;width:30.00px;height:1.6px;background:repeating-linear-gradient(to right,#7a7a7a 0 1.8px,transparent 1.8px 4.66px)"></div>
<svg class="a" style="left:304.00px;top:1292.25px" width="44" height="44" viewBox="0 0 100 100"><g fill="#7b1fa2"><circle cx="50" cy="50" r="36"/><rect x="40.5" y="0" width="19" height="100"/><rect x="0" y="40.5" width="100" height="19"/><rect x="40.5" y="1" width="19" height="98" transform="rotate(45 50 50)"/><rect x="1" y="40.5" width="98" height="19" transform="rotate(45 50 50)"/></g><circle cx="50" cy="50" r="22.5" fill="#fff"/></svg>
<div class="t" style="left:358.50px;top:1298.79px;font-size:27.0px;line-height:27.0px;color:#2b2b2b;font-weight:400;">MP0370-004</div>
<div class="t" style="left:682.00px;top:1298.37px;font-size:27.5px;line-height:27.5px;color:#2b2b2b;font-weight:400;">A</div>
<div class="t" style="left:776.00px;top:1298.37px;font-size:27.5px;line-height:27.5px;color:#2b2b2b;font-weight:400;">Released</div>
<div class="t" style="left:987.00px;top:1298.37px;font-size:27.5px;line-height:27.5px;color:#2b2b2b;font-weight:400;">10</div>
<div class="t" style="left:1152.50px;top:1298.37px;font-size:27.5px;line-height:27.5px;color:#2b2b2b;font-weight:400;">38</div>
<div class="t" style="left:1551.20px;top:1298.37px;font-size:27.5px;line-height:27.5px;color:#2b2b2b;font-weight:400;">M3x16 Socket Cap Bolt</div>
<div class="rl" style="top:1422.75px"></div>
<div class="a" style="left:266.00px;top:1383.95px;width:30.00px;height:1.6px;background:repeating-linear-gradient(to right,#7a7a7a 0 1.8px,transparent 1.8px 4.66px)"></div>
<svg class="a" style="left:304.00px;top:1367.50px" width="44" height="44" viewBox="0 0 100 100"><g fill="#7b1fa2"><circle cx="50" cy="50" r="36"/><rect x="40.5" y="0" width="19" height="100"/><rect x="0" y="40.5" width="100" height="19"/><rect x="40.5" y="1" width="19" height="98" transform="rotate(45 50 50)"/><rect x="1" y="40.5" width="98" height="19" transform="rotate(45 50 50)"/></g><circle cx="50" cy="50" r="22.5" fill="#fff"/></svg>
<div class="t" style="left:358.50px;top:1374.04px;font-size:27.0px;line-height:27.0px;color:#2b2b2b;font-weight:400;">MP0370-006</div>
<div class="t" style="left:682.00px;top:1373.62px;font-size:27.5px;line-height:27.5px;color:#2b2b2b;font-weight:400;">A</div>
<div class="t" style="left:776.00px;top:1373.62px;font-size:27.5px;line-height:27.5px;color:#2b2b2b;font-weight:400;">Released</div>
<div class="t" style="left:987.00px;top:1373.62px;font-size:27.5px;line-height:27.5px;color:#2b2b2b;font-weight:400;">15</div>
<div class="t" style="left:1152.50px;top:1373.62px;font-size:27.5px;line-height:27.5px;color:#2b2b2b;font-weight:400;">4</div>
<div class="t" style="left:1551.20px;top:1373.62px;font-size:27.5px;line-height:27.5px;color:#2b2b2b;font-weight:400;">M3x25 Socket Cap Bolt</div>
<div class="rl" style="top:1498.00px"></div>
<div class="a" style="left:266.00px;top:1459.20px;width:30.00px;height:1.6px;background:repeating-linear-gradient(to right,#7a7a7a 0 1.8px,transparent 1.8px 4.66px)"></div>
<svg class="a" style="left:304.00px;top:1442.75px" width="44" height="44" viewBox="0 0 100 100"><g fill="#7b1fa2"><circle cx="50" cy="50" r="36"/><rect x="40.5" y="0" width="19" height="100"/><rect x="0" y="40.5" width="100" height="19"/><rect x="40.5" y="1" width="19" height="98" transform="rotate(45 50 50)"/><rect x="1" y="40.5" width="98" height="19" transform="rotate(45 50 50)"/></g><circle cx="50" cy="50" r="22.5" fill="#fff"/></svg>
<div class="t" style="left:358.50px;top:1449.29px;font-size:27.0px;line-height:27.0px;color:#2b2b2b;font-weight:400;">MP2728</div>
<div class="t" style="left:682.00px;top:1448.87px;font-size:27.5px;line-height:27.5px;color:#2b2b2b;font-weight:400;">A</div>
<div class="t" style="left:776.00px;top:1448.87px;font-size:27.5px;line-height:27.5px;color:#2b2b2b;font-weight:400;">Released</div>
<div class="t" style="left:987.00px;top:1448.87px;font-size:27.5px;line-height:27.5px;color:#2b2b2b;font-weight:400;">20</div>
<div class="t" style="left:1152.50px;top:1448.87px;font-size:27.5px;line-height:27.5px;color:#2b2b2b;font-weight:400;">5</div>
<div class="t" style="left:1551.20px;top:1448.87px;font-size:27.5px;line-height:27.5px;color:#2b2b2b;font-weight:400;">Support Blind Hole Mount</div>
<div class="rl" style="top:1573.25px"></div>
<div class="a" style="left:266.00px;top:1534.45px;width:30.00px;height:1.6px;background:repeating-linear-gradient(to right,#7a7a7a 0 1.8px,transparent 1.8px 4.66px)"></div>
<svg class="a" style="left:304.00px;top:1518.00px" width="44" height="44" viewBox="0 0 100 100"><g fill="#7b1fa2"><circle cx="50" cy="50" r="36"/><rect x="40.5" y="0" width="19" height="100"/><rect x="0" y="40.5" width="100" height="19"/><rect x="40.5" y="1" width="19" height="98" transform="rotate(45 50 50)"/><rect x="1" y="40.5" width="98" height="19" transform="rotate(45 50 50)"/></g><circle cx="50" cy="50" r="22.5" fill="#fff"/></svg>
<div class="t" style="left:358.50px;top:1524.54px;font-size:27.0px;line-height:27.0px;color:#2b2b2b;font-weight:400;">MP0370-008</div>
<div class="t" style="left:682.00px;top:1524.12px;font-size:27.5px;line-height:27.5px;color:#2b2b2b;font-weight:400;">A</div>
<div class="t" style="left:776.00px;top:1524.12px;font-size:27.5px;line-height:27.5px;color:#2b2b2b;font-weight:400;">Released</div>
<div class="t" style="left:987.00px;top:1524.12px;font-size:27.5px;line-height:27.5px;color:#2b2b2b;font-weight:400;">25</div>
<div class="t" style="left:1152.50px;top:1524.12px;font-size:27.5px;line-height:27.5px;color:#2b2b2b;font-weight:400;">2</div>
<div class="t" style="left:1551.20px;top:1524.12px;font-size:27.5px;line-height:27.5px;color:#2b2b2b;font-weight:400;">M3x35 Socket Cap Bolt</div>
<div class="rl" style="top:1648.50px"></div>
<div class="a" style="left:208.0px;top:1602.25px;width:21.7px;height:21.7px;border:2px solid #808080;background:#fff"></div>
<div class="a" style="left:213.5px;top:1614.25px;width:15px;height:2px;background:#808080"></div>
<div class="a" style="left:235.00px;top:1609.70px;width:21.50px;height:1.6px;background:repeating-linear-gradient(to right,#7a7a7a 0 1.8px,transparent 1.8px 4.66px)"></div>
<svg class="a" style="left:261.50px;top:1593.25px" width="44" height="44" viewBox="0 0 100 100"><g fill="#7b1fa2"><circle cx="50" cy="50" r="36"/><rect x="40.5" y="0" width="19" height="100"/><rect x="0" y="40.5" width="100" height="19"/><rect x="40.5" y="1" width="19" height="98" transform="rotate(45 50 50)"/><rect x="1" y="40.5" width="98" height="19" transform="rotate(45 50 50)"/></g><circle cx="50" cy="50" r="22.5" fill="#fff"/></svg>
<div class="t" style="left:316.00px;top:1599.79px;font-size:27.0px;line-height:27.0px;color:#2b2b2b;font-weight:400;">MP2941</div>
<div class="t" style="left:682.00px;top:1599.37px;font-size:27.5px;line-height:27.5px;color:#2b2b2b;font-weight:400;">B</div>
<div class="t" style="left:776.00px;top:1599.37px;font-size:27.5px;line-height:27.5px;color:#2b2b2b;font-weight:400;">Preliminary</div>
<div class="t" style="left:987.00px;top:1599.37px;font-size:27.5px;line-height:27.5px;color:#2b2b2b;font-weight:400;">30</div>
<div class="t" style="left:1152.50px;top:1599.37px;font-size:27.5px;line-height:27.5px;color:#2b2b2b;font-weight:400;">1</div>
<div class="t" style="left:1551.20px;top:1599.37px;font-size:27.5px;line-height:27.5px;color:#2b2b2b;font-weight:400;">Body Panels</div>
<div class="a" style="left:2945px;top:596px;width:14px;height:1061px;background:#f9f9f9"></div>
<div class="a" style="left:2943.3px;top:595px;width:1.8px;height:1062px;background:#d9d9d9"></div>
</body></html>
